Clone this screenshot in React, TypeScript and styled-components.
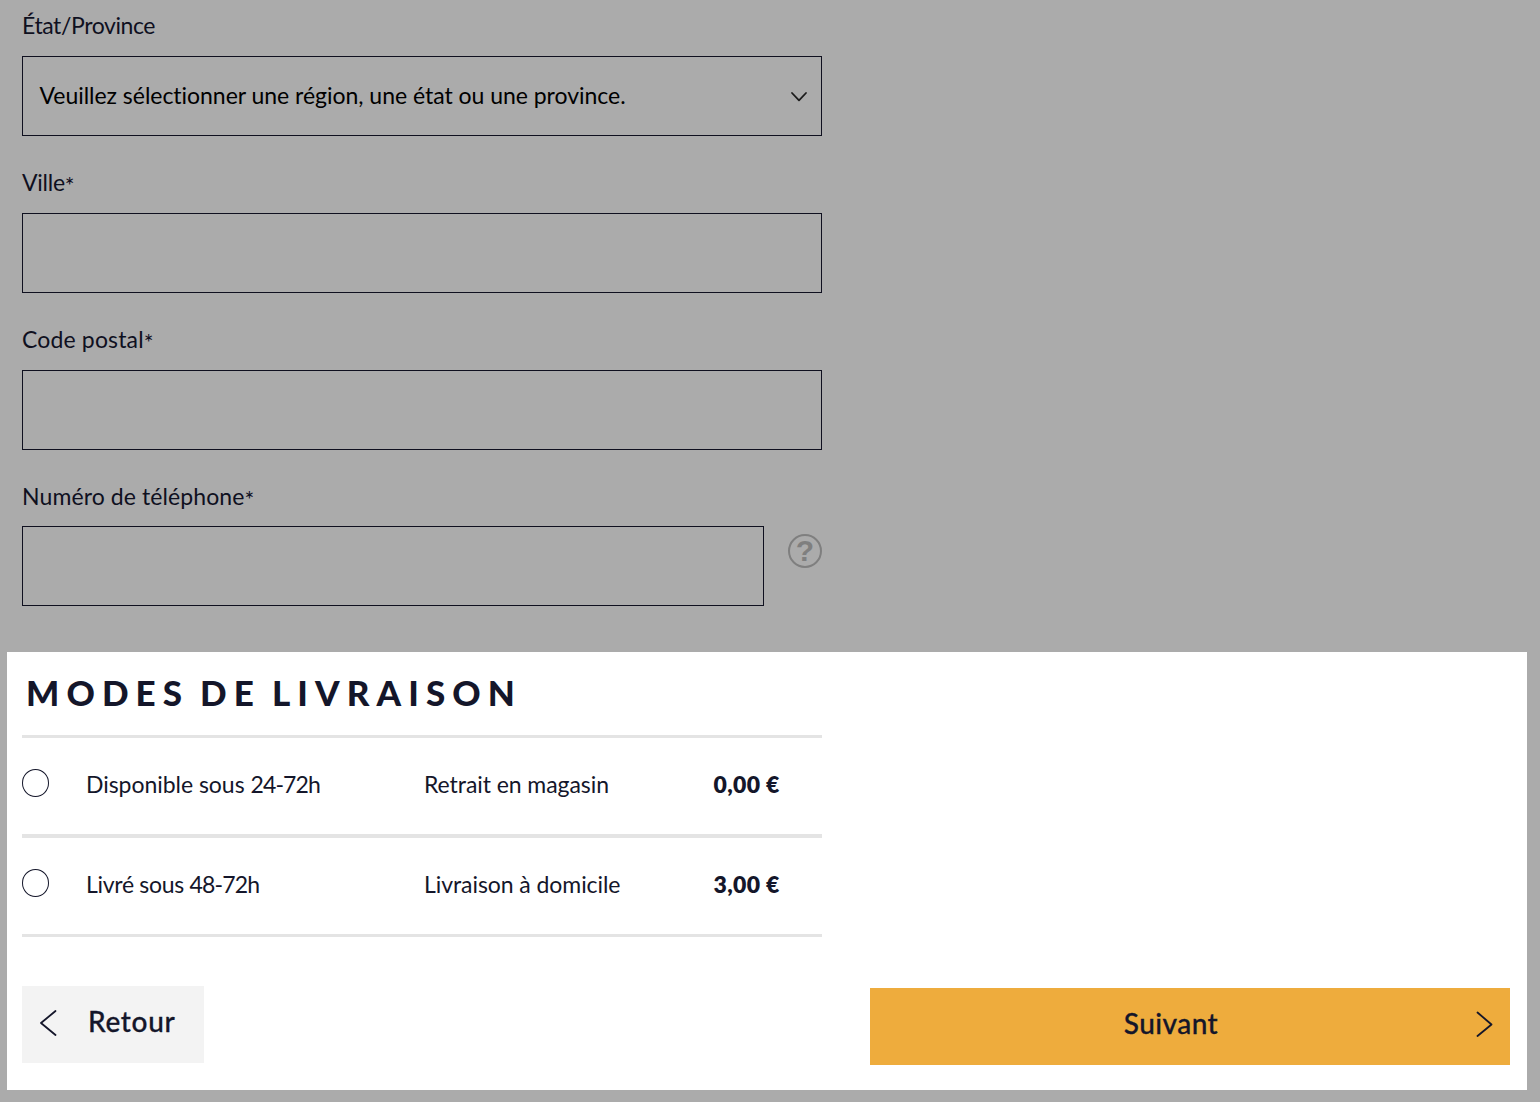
import React, { useState } from 'react'
import styled, { createGlobalStyle } from 'styled-components'

const GlobalStyle = createGlobalStyle`
  * {
    box-sizing: border-box;
  }

  body {
    margin: 0;
    background: #ababab;
    color: #14162a;
    font-family: Lato, 'Open Sans', sans-serif;
    font-size: 23px;
    line-height: 28px;
    font-variant-ligatures: none;
    overflow: hidden;
  }
`

const Page = styled.div`
  width: 1540px;
  height: 1102px;
  padding: 11px 13px 12px 7px;
  display: flex;
  flex-direction: column;
  gap: 46px;
  overflow: hidden;
`

const Address = styled.form`
  width: 800px;
  margin-left: 15px;
  display: flex;
  flex-direction: column;
  gap: 32px;
`

const Field = styled.div<{ gap?: number }>`
  display: flex;
  flex-direction: column;
  gap: ${({ gap }) => gap ?? 17}px;
`

const Text = styled.span<{ $spacing?: number }>`
  letter-spacing: ${({ $spacing }) => $spacing ?? 0}px;
  white-space: nowrap;
`

const Label = styled(Text).attrs({ as: 'label' })`
  height: 28px;
  color: #0f101f;
`

const Required = styled.span`
  line-height: 0;
  vertical-align: -3px;
`

const Input = styled.input`
  flex: 1;
  min-width: 0;
  width: 100%;
  min-height: 80px;
  padding: 0 17px;
  border: 1px solid #0f101f;
  border-radius: 0;
  background: transparent;
  font: inherit;
  outline: none;
`

const Select = styled.div`
  height: 80px;
  padding: 0 13px 2px 16.5px;
  display: flex;
  align-items: center;
  justify-content: space-between;
  border: 1px solid #0f101f;
  color: #000;
`

const PhoneRow = styled.div`
  display: flex;
  gap: 24px;
`

const Help = styled.span`
  width: 34px;
  height: 34px;
  margin-top: 8px;
  display: flex;
  align-items: center;
  justify-content: center;
  border: 2px solid #7f7f7f;
  border-radius: 50%;
  color: #7f7f7f;
  font: bold 30px/30px 'Liberation Sans', sans-serif;
`

const Panel = styled.section`
  height: 438px;
  padding: 23px 17px 25px 15px;
  display: flex;
  flex-direction: column;
  background: #fff;
`

const Title = styled.h2`
  margin: 0 0 26px 4px;
  font-size: 35px;
  font-weight: 900;
  line-height: 34px;
  letter-spacing: 7.1px;
  word-spacing: -4.5px;
  white-space: nowrap;
`

const Methods = styled.div`
  width: 800px;
  border-top: 3px solid #e4e4e4;
`

const Method = styled.label<{ $line: number }>`
  padding: 32px 0 36px;
  display: grid;
  grid-template-columns: 64px 338px 289.5px 1fr;
  border-bottom: ${({ $line }) => $line}px solid #e4e4e4;
`

const Radio = styled.input.attrs({ type: 'radio' })`
  appearance: none;
  width: 27px;
  height: 28px;
  margin: -1px 0 0;
  border: 1px solid #14162a;
  border-radius: 50%;

  &:checked {
    background: radial-gradient(#14162a 45%, transparent 50%);
  }
`

const Price = styled(Text)`
  font-weight: 800;
`

const Actions = styled.div`
  margin-top: 49px;
  display: flex;
  justify-content: space-between;
`

const Button = styled.button`
  height: 77px;
  padding: 0;
  display: flex;
  border: 0;
  color: inherit;
  font: 500 28px/34px Lato, sans-serif;
  -webkit-text-stroke: 0.3px currentColor;
`

const BackButton = styled(Button)`
  width: 182px;
  padding: 18px 0 0 17px;
  gap: 31px;
  background: #f3f3f3;
`

const NextButton = styled(Button)`
  width: 640px;
  margin-top: 2px;
  padding: 18px 17px 0;
  background: #eeac3d;

  span {
    flex: 1;
    padding-right: 20px;
    text-align: center;
  }
`

const Arrow = styled.svg`
  flex: none;
  fill: none;
  stroke: currentColor;
  stroke-width: 1.8;
  stroke-linecap: round;
  stroke-linejoin: round;
`

const SelectArrow = styled(Arrow)`
  margin-top: 4px;
  color: #1b1b1b;
`

const ButtonArrow = styled(Arrow)`
  margin-top: 5px;
`

const methods = [
  {
    id: 'pickup',
    delay: 'Disponible sous ',
    range: '24-72h',
    delaySpacing: -0.04,
    mode: 'Retrait en magasin',
    price: '0,00 €',
    line: 4,
  },
  {
    id: 'home',
    delay: 'Livré sous ',
    range: '48-72h',
    delaySpacing: -0.3,
    mode: 'Livraison à domicile',
    price: '3,00 €',
    line: 3,
  },
]

export default function App() {
  const [selected, setSelected] = useState('')

  return (
    <>
      <GlobalStyle />
      <Page>
        <Address>
          <Field>
            <Label $spacing={-0.4}>État/Province</Label>
            <Select>
              <Text $spacing={-0.03}>Veuillez sélectionner une région, une état ou une province.</Text>
              <SelectArrow width="18" height="12" viewBox="0 0 18 12">
                <path d="M2 2l7 7.3L16 2" />
              </SelectArrow>
            </Select>
          </Field>
          <Field>
            <Label $spacing={-0.25}>
              Ville<Required>*</Required>
            </Label>
            <Input />
          </Field>
          <Field>
            <Label $spacing={0.15}>
              Code postal<Required>*</Required>
            </Label>
            <Input />
          </Field>
          <Field gap={16}>
            <Label $spacing={0.1}>
              Numéro de téléphone<Required>*</Required>
            </Label>
            <PhoneRow>
              <Input />
              <Help>?</Help>
            </PhoneRow>
          </Field>
        </Address>
        <Panel>
          <Title>MODES DE LIVRAISON</Title>
          <Methods>
            {methods.map((m) => (
              <Method key={m.id} $line={m.line}>
                <Radio name="method" checked={selected === m.id} onChange={() => setSelected(m.id)} />
                <Text $spacing={m.delaySpacing}>
                  {m.delay}
                  <Text $spacing={-0.85}>{m.range}</Text>
                </Text>
                <Text $spacing={-0.07}>{m.mode}</Text>
                <Price $spacing={0.35}>{m.price}</Price>
              </Method>
            ))}
          </Methods>
          <Actions>
            <BackButton>
              <ButtonArrow width="18" height="27" viewBox="0 0 18 27">
                <path d="M16.5 2L2 14l14.5 12" />
              </ButtonArrow>
              <Text $spacing={0.7}>Retour</Text>
            </BackButton>
            <NextButton>
              <Text $spacing={0.45}>Suivant</Text>
              <ButtonArrow width="18" height="27" viewBox="0 0 18 27">
                <path d="M2.5 1.5l14 12-14 11.5" />
              </ButtonArrow>
            </NextButton>
          </Actions>
        </Panel>
      </Page>
    </>
  )
}
